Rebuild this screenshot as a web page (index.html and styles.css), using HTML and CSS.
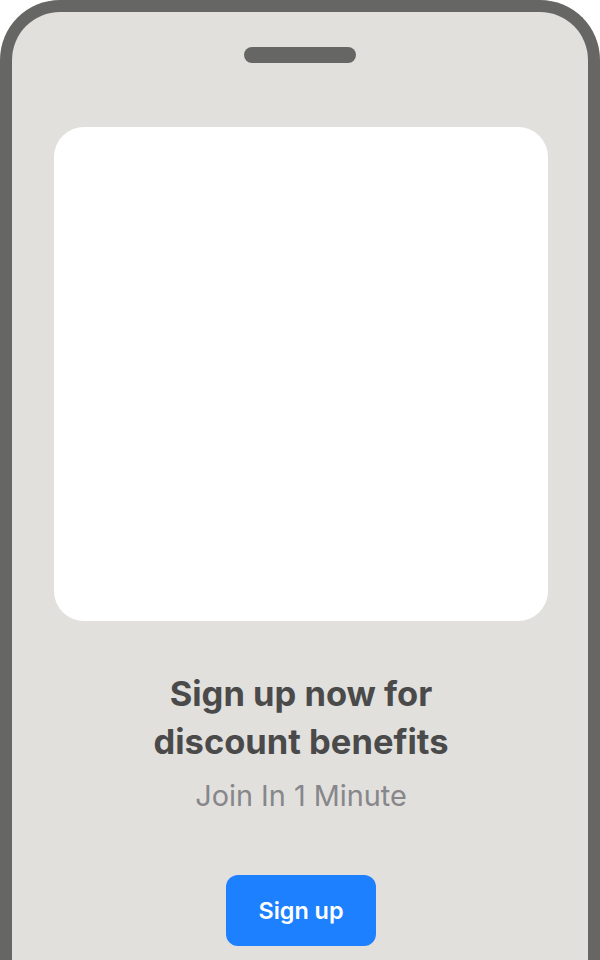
FILE: index.html
```html
<!DOCTYPE html>
<html lang="en">
<head>
<meta charset="utf-8">
<title>Sign up</title>
<link rel="stylesheet" href="styles.css">
</head>
<body>
  <div class="phone">
    <div class="notch"></div>
    <div class="media"></div>
    <h1 class="title">Sign up now for<br>discount benefits</h1>
    <p class="subtitle">Join In 1 Minute</p>
    <button class="cta" type="button">Sign up</button>
  </div>
</body>
</html>
```

FILE: styles.css
```css
html, body {
  margin: 0;
  padding: 0;
  background: #ffffff;
  overflow: hidden;
}

.phone {
  box-sizing: border-box;
  width: 600px;
  height: 1000px;
  padding-left: 2px;
  background: #e1e0dd;
  border: 12px solid #666664;
  border-bottom: none;
  border-radius: 60px 60px 0 0;
  display: flex;
  flex-direction: column;
  align-items: center;
  font-family: Inter, "Noto Sans", sans-serif;
}

.notch {
  width: 112px;
  height: 16px;
  border-radius: 8px;
  background: #666664;
  margin-top: 35px;
  margin-right: 2px;
  flex: none;
}

.media {
  width: 494px;
  height: 494px;
  background: #ffffff;
  border-radius: 30px;
  margin-top: 64px;
  flex: none;
}

.title {
  margin: 49px 0 0;
  font-size: 34.5px;
  font-weight: 700;
  line-height: 48px;
  color: #4a4a4a;
  text-align: center;
}

.subtitle {
  margin: 12px 0 0;
  font-size: 28.8px;
  line-height: 36px;
  color: #87868a;
  text-align: center;
}

.cta {
  margin-top: 61px;
  width: 150px;
  height: 71px;
  border: none;
  border-radius: 12px;
  background: #1c80ff;
  color: #ffffff;
  font-family: Inter, "Noto Sans", sans-serif;
  font-size: 23.4px;
  font-weight: 600;
  flex: none;
}
```
